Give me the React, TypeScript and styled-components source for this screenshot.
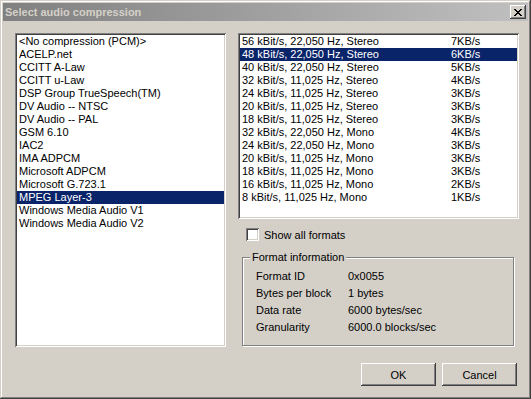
import React from 'react';
import styled, {createGlobalStyle} from "styled-components";

const GlobalStyle = createGlobalStyle`
    html, body {
        margin: 0;
        padding: 0;
        background: #d4d0c8;
    }
    body {
        font-family: "Liberation Sans", Arial, sans-serif;
        font-size: 11px;
        color: #000;
    }
`

const codecs = [
    '<No compression (PCM)>',
    'ACELP.net',
    'CCITT A-Law',
    'CCITT u-Law',
    'DSP Group TrueSpeech(TM)',
    'DV Audio -- NTSC',
    'DV Audio -- PAL',
    'GSM 6.10',
    'IAC2',
    'IMA ADPCM',
    'Microsoft ADPCM',
    'Microsoft G.723.1',
    'MPEG Layer-3',
    'Windows Media Audio V1',
    'Windows Media Audio V2',
]

const formats = [
    ['56 kBit/s, 22,050 Hz, Stereo', '7KB/s'],
    ['48 kBit/s, 22,050 Hz, Stereo', '6KB/s'],
    ['40 kBit/s, 22,050 Hz, Stereo', '5KB/s'],
    ['32 kBit/s, 11,025 Hz, Stereo', '4KB/s'],
    ['24 kBit/s, 11,025 Hz, Stereo', '3KB/s'],
    ['20 kBit/s, 11,025 Hz, Stereo', '3KB/s'],
    ['18 kBit/s, 11,025 Hz, Stereo', '3KB/s'],
    ['32 kBit/s, 22,050 Hz, Mono', '4KB/s'],
    ['24 kBit/s, 22,050 Hz, Mono', '3KB/s'],
    ['20 kBit/s, 11,025 Hz, Mono', '3KB/s'],
    ['18 kBit/s, 11,025 Hz, Mono', '3KB/s'],
    ['16 kBit/s, 11,025 Hz, Mono', '2KB/s'],
    ['8 kBit/s, 11,025 Hz, Mono', '1KB/s'],
]

const info = [
    ['Format ID', '0x0055'],
    ['Bytes per block', '1 bytes'],
    ['Data rate', '6000 bytes/sec'],
    ['Granularity', '6000.0 blocks/sec'],
]

export default function App() {
    return (
        <>
            <GlobalStyle/>
            <Window>
                <TitleBar>
                    <Title>Select audio compression</Title>
                    <CloseButton>
                        <svg width="8" height="7" viewBox="0 0 8 7">
                            <path d="M0 0h2v1h1v1h2v-1h1v-1h2v1h-1v1h-1v1h-1v1h1v1h1v1h1v1h-2v-1h-1v-1h-2v1h-1v1h-2v-1h1v-1h1v-1h1v-1h-1v-1h-1v-1h-1z" fill="#000"/>
                        </svg>
                    </CloseButton>
                </TitleBar>
                <Content>
                    <Main>
                        <CodecList>
                            {codecs.map((c, i) => (
                                <Item key={c} selected={i === 12}>{c}</Item>
                            ))}
                        </CodecList>
                        <RightColumn>
                            <FormatList>
                                {formats.map(([name, rate], i) => (
                                    <FormatItem key={name} selected={i === 1}>
                                        <span>{name}</span>
                                        <span>{rate}</span>
                                    </FormatItem>
                                ))}
                            </FormatList>
                            <CheckRow>
                                <CheckBox/>
                                <span>Show all formats</span>
                            </CheckRow>
                            <GroupBox>
                                <Legend>Format information</Legend>
                                {info.map(([label, value]) => (
                                    <InfoRow key={label}>
                                        <span>{label}</span>
                                        <span>{value}</span>
                                    </InfoRow>
                                ))}
                            </GroupBox>
                        </RightColumn>
                    </Main>
                    <ButtonRow>
                        <Button>OK</Button>
                        <Button>Cancel</Button>
                    </ButtonRow>
                </Content>
            </Window>
        </>
    );
}

const Window = styled.div`
    box-sizing: border-box;
    width: 531px;
    height: 399px;
    background: #d4d0c8;
    padding: 3px;
    box-shadow: inset -1px -1px #404040, inset 1px 1px #d4d0c8,
    inset -2px -2px #808080, inset 2px 2px #ffffff;
    display: flex;
    flex-direction: column;
`

const TitleBar = styled.div`
    height: 18px;
    background: linear-gradient(to right, #808080, #c0c0c0);
    display: flex;
    align-items: center;
    justify-content: space-between;
    padding: 0 2px 0 2px;
`

const Title = styled.span`
    color: #d4d0c8;
    font-weight: bold;
    font-size: 11px;
`

const CloseButton = styled.div`
    width: 16px;
    height: 14px;
    background: #d4d0c8;
    display: flex;
    align-items: center;
    justify-content: center;
    box-shadow: inset -1px -1px #404040, inset 1px 1px #ffffff,
    inset -2px -2px #808080, inset 2px 2px #d4d0c8;
`

const Content = styled.div`
    padding: 12px 9px 0 12px;
    display: flex;
    flex-direction: column;
`

const Main = styled.div`
    display: flex;
    gap: 12px;
`

const Sunken = styled.div`
    box-sizing: border-box;
    background: #ffffff;
    padding: 2px;
    box-shadow: inset 1px 1px #808080, inset -1px -1px #ffffff,
    inset 2px 2px #404040, inset -2px -2px #d4d0c8;
    overflow: hidden;
`

const CodecList = styled(Sunken)`
    width: 211px;
    height: 314px;
`

const Item = styled.div<{ selected?: boolean }>`
    height: 13px;
    line-height: 13px;
    padding-left: 2px;
    white-space: nowrap;
    background: ${p => p.selected ? '#0a246a' : 'transparent'};
    color: ${p => p.selected ? '#ffffff' : '#000000'};
`

const RightColumn = styled.div`
    width: 281px;
    display: flex;
    flex-direction: column;
`

const FormatList = styled(Sunken)`
    height: 186px;
`

const FormatItem = styled(Item)`
    display: grid;
    grid-template-columns: 209px 1fr;
`

const CheckRow = styled.div`
    display: flex;
    align-items: center;
    gap: 5px;
    margin: 9px 0 0 8px;
    height: 13px;
`

const CheckBox = styled.div`
    width: 13px;
    height: 13px;
    box-sizing: border-box;
    background: #ffffff;
    box-shadow: inset 1px 1px #808080, inset -1px -1px #ffffff,
    inset 2px 2px #404040, inset -2px -2px #d4d0c8;
`

const GroupBox = styled.div`
    position: relative;
    box-sizing: border-box;
    margin: 16px 5px 0 4px;
    height: 89px;
    border: 1px solid #808080;
    box-shadow: inset 1px 1px #ffffff, 1px 1px #ffffff;
    padding: 10px 0 0 13px;
`

const Legend = styled.span`
    position: absolute;
    top: -7px;
    left: 7px;
    padding: 0 2px;
    background: #d4d0c8;
    line-height: 13px;
`

const InfoRow = styled.div`
    display: grid;
    grid-template-columns: 92px 1fr;
    height: 17px;
    line-height: 17px;
`

const ButtonRow = styled.div`
    display: flex;
    justify-content: flex-end;
    gap: 6px;
    margin-top: 16px;
    padding-right: 2px;
`

const Button = styled.button`
    width: 75px;
    height: 23px;
    border: none;
    background: #d4d0c8;
    font-family: "Liberation Sans", Arial, sans-serif;
    font-size: 11px;
    color: #000;
    padding: 0;
    box-shadow: inset -1px -1px #404040, inset 1px 1px #ffffff,
    inset -2px -2px #808080, inset 2px 2px #d4d0c8;
`
